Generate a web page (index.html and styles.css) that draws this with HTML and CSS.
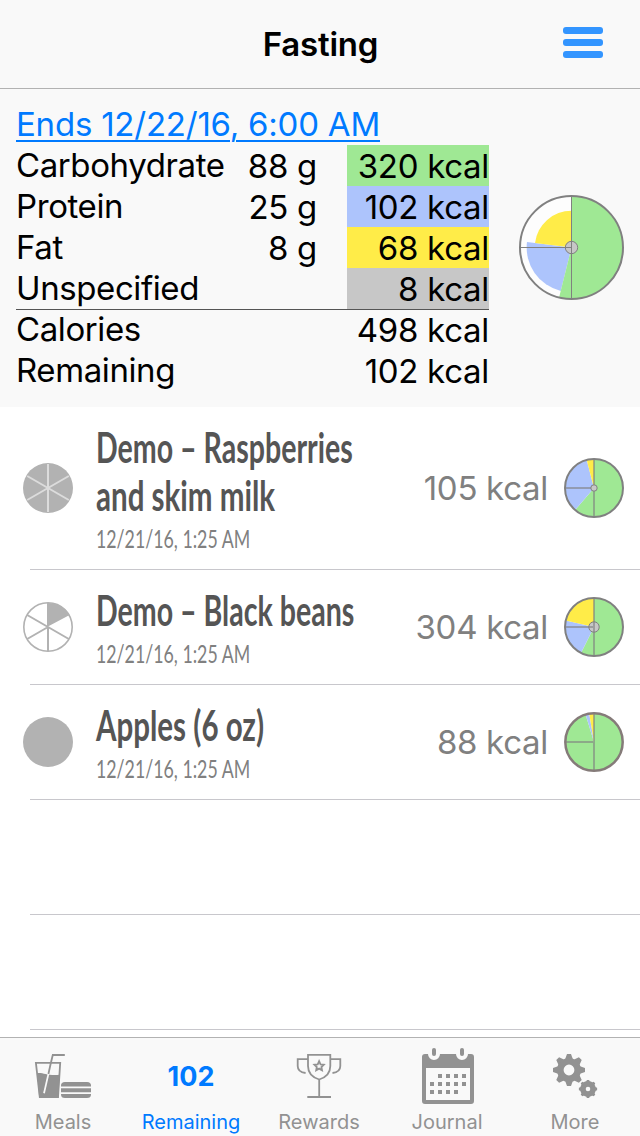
FILE: index.html
```html
<!DOCTYPE html>
<html lang="en">
<head>
  <meta charset="UTF-8" />
  <meta name="viewport" content="width=device-width, initial-scale=1.0" />
  <title>Fasting</title>
  <link rel="stylesheet" href="styles.css">
</head>
<body>
  <header class="navbar">
    <h1>Fasting</h1>
    <button class="menu" aria-label="Menu"><span></span><span></span><span></span></button>
  </header>

  <section class="summary">
    <div class="totals">
      <a class="ends" href="#">Ends 12/22/16, 6:00 AM</a>
      <div class="total"><span class="name">Carbohydrate</span><span class="grams">88 g</span><span class="kcal carb">320 kcal</span></div>
      <div class="total"><span class="name">Protein</span><span class="grams">25 g</span><span class="kcal protein">102 kcal</span></div>
      <div class="total"><span class="name">Fat</span><span class="grams">8 g</span><span class="kcal fat">68 kcal</span></div>
      <div class="total"><span class="name">Unspecified</span><span class="grams"></span><span class="kcal other">8 kcal</span></div>
      <div class="total sum"><span class="name">Calories</span><span class="grams"></span><span class="kcal">498 kcal</span></div>
      <div class="total"><span class="name">Remaining</span><span class="grams"></span><span class="kcal">102 kcal</span></div>
    </div>
    <svg class="pie-large" viewBox="-52.5 -52.5 105 105">
      <circle r="51.5" fill="#fdfdfd" />
      <path class="fill-protein" d="M0 0L-10.7 43.5A44.8 44.8 0 0 1 -44.5 -5.5Z" />
      <path class="fill-carb" d="M0 0V-51.5A51.5 51.5 0 1 1 -12.4 50Z" />
      <path class="fill-fat" d="M0 0L-36.5 -4.6A36.8 36.8 0 0 1 0 -36.8Z" />
      <circle class="hub" r="6.2" />
      <path class="axis" d="M0 -51V51M0 0H-51" />
      <circle class="ring" r="51.5" />
    </svg>
  </section>

  <main class="meals">
    <div class="meal meal-tall">
      <svg class="portion" viewBox="-25 -25 50 50">
        <circle r="25" />
        <path class="cuts light" d="M0 -24V24M-20.8 -12L20.8 12M-20.8 12L20.8 -12" />
      </svg>
      <div class="info">
        <div class="title"><span>Demo – Raspberries</span><br><span class="wide">and skim milk</span></div>
        <div class="date"><span>12/21/16, 1:25 AM</span></div>
      </div>
      <div class="energy">105 kcal</div>
      <svg class="pie" viewBox="-30 -30 60 60">
        <path class="fill-carb" d="M0 0V-29A29 29 0 1 1 -18.9 22Z" />
        <path class="fill-protein" d="M0 0L-18.9 22A29 29 0 0 1 -7.3 -28Z" />
        <path class="fill-fat" d="M0 0L-7.3 -28A29 29 0 0 1 0 -29Z" />
        <path class="axis" d="M0 -29V29M0 0H-29" />
        <circle class="hub" r="3.2" />
        <circle class="ring" r="29" />
      </svg>
    </div>
    <div class="meal">
      <svg class="portion" viewBox="-25 -25 50 50">
        <circle class="outline" r="24.2" />
        <path d="M-1 0V-24H0A24 24 0 0 1 21.6 -12Z" />
        <path class="cuts" d="M0 0V24M-20.8 -12L20.8 12M-20.8 12L0 0" />
      </svg>
      <div class="info">
        <div class="title"><span>Demo – Black beans</span></div>
        <div class="date"><span>12/21/16, 1:25 AM</span></div>
      </div>
      <div class="energy">304 kcal</div>
      <svg class="pie" viewBox="-30 -30 60 60">
        <path class="fill-carb" d="M0 0V-29A29 29 0 1 1 -13 25.9Z" />
        <path class="fill-protein" d="M0 0L-13 25.9A29 29 0 0 1 -28.3 -6.4Z" />
        <path class="fill-fat" d="M0 0L-28.3 -6.4A29 29 0 0 1 0 -29Z" />
        <circle class="hub" r="5.2" />
        <path class="axis" d="M0 -29V29M0 0H-29" />
        <circle class="ring" r="29" />
      </svg>
    </div>
    <div class="meal">
      <svg class="portion" viewBox="-25 -25 50 50">
        <circle r="25" />
      </svg>
      <div class="info">
        <div class="title"><span class="wide">Apples (6 oz)</span></div>
        <div class="date"><span>12/21/16, 1:25 AM</span></div>
      </div>
      <div class="energy">88 kcal</div>
      <svg class="pie" viewBox="-30 -30 60 60">
        <path class="fill-carb" d="M0 0V-29A29 29 0 1 1 -8.5 -27.7Z" />
        <path class="fill-protein" d="M0 0L-8.5 -27.7A29 29 0 0 1 -4.8 -28.6Z" />
        <path class="fill-fat" d="M0 0L-4.8 -28.6A29 29 0 0 1 0 -29Z" />
        <path class="axis" d="M0 -29V29M0 0H-29" />
        <circle class="ring thick" r="28.7" />
      </svg>
    </div>
    <div class="meal"></div>
    <div class="meal"></div>
  </main>

  <nav class="tabbar">
    <div class="tab">
      <svg class="icon" viewBox="33 17 60 64">
        <path class="line" d="M35.9 37.8H60.2L58 72.2H39.8Z" />
        <path d="M37.3 48.2C42 46.8 47 51 59.7 49.7L58.5 73H39.2Z" />
        <path class="line" d="M64.8 30H52.8L50.6 39L48.4 49" />
        <path class="straw" d="M48.4 49L44 68.3" />
        <path d="M61 61.4V60.5Q61 57 65 57H87Q91 57 91 60.5V61.4ZM61 63.2H91V67.2H61ZM61 69H91V69.5Q91 73 87 73H65Q61 73 61 69.5Z" />
      </svg>
      <span>Meals</span>
    </div>
    <div class="tab active">
      <b class="count">102</b>
      <span>Remaining</span>
    </div>
    <div class="tab">
      <svg class="icon" viewBox="39 17 60 64">
        <path class="line" d="M58 29.8H80.3V41C80.3 48.5 75.5 52.5 69.2 54.5C62.9 52.5 58 48.5 58 41ZM69.2 54V72M57.3 72H81M58 34.2H47.7V41C47.7 45 51 47.5 55.6 48M80.4 34.2H90.3V41C90.3 45 87 47.5 82.5 48" />
        <path class="line" d="M69.1 36.2L70.5 39.3L73.8 39.7L71.4 42L72 45.2L69.1 43.6L66.2 45.2L66.8 42L64.4 39.7L67.7 39.3Z" />
      </svg>
      <span>Rewards</span>
    </div>
    <div class="tab">
      <svg class="icon" viewBox="167 17 60 64">
        <path fill-rule="evenodd" d="M175 29H178A6 6 0 0 0 190 29H206A6 6 0 0 0 218 29H221Q224 29 224 32V76Q224 79 221 79H175Q172 79 172 76V32Q172 29 175 29ZM176 43V75H220V43Z" />
        <rect x="182" y="23" width="4" height="8" rx="2" />
        <rect x="210" y="23" width="4" height="8" rx="2" />
        <path class="days" d="M188 51H216M180 59H216M180 67H208" />
      </svg>
      <span>Journal</span>
    </div>
    <div class="tab">
      <svg class="icon" viewBox="45 17 60 64">
        <g transform="translate(69 45)">
          <circle class="gear" r="8.7" />
          <path id="teeth" d="M-3.8 -11L-2 -16H2L3.8 -11ZM-3.8 11L-2 16H2L3.8 11ZM-11 -3.8L-16 -2V2L-11 3.8ZM11 -3.8L16 -2V2L11 3.8Z" />
          <use href="#teeth" transform="rotate(45)" />
        </g>
        <g transform="translate(88 64)">
          <circle class="gear-small" r="5.1" />
          <use href="#teeth" transform="scale(.57)" />
          <use href="#teeth" transform="rotate(45) scale(.57)" />
        </g>
      </svg>
      <span>More</span>
    </div>
  </nav>
</body>
</html>
```
FILE: styles.css
```css
* {
  box-sizing: border-box;
}
body {
  margin: 0;
  width: 640px;
  height: 1136px;
  display: flex;
  flex-direction: column;
  overflow: hidden;
  background: #fff;
  color: #000;
  font-family: Inter, "Liberation Sans", sans-serif;
}

/* Top bar */
.navbar {
  height: 89px;
  display: grid;
  grid-template-columns: 1fr auto 1fr;
  align-items: center;
  padding: 0 37px;
  background: #f9f9f9;
  border-bottom: 1px solid #b2b2b2;
}
h1 {
  grid-column: 2;
  margin: 0;
  padding-left: 1px;
  font-size: 33px;
  line-height: 40px;
  font-weight: 600;
  letter-spacing: -.2px;
}
.menu {
  justify-self: end;
  display: flex;
  flex-direction: column;
  gap: 5px;
  width: 40px;
  margin-top: -3px;
  padding: 0;
  border: 0;
  background: none;
}
.menu span {
  height: 7px;
  border-radius: 3px;
  background: #3395ff;
}

/* Nutrient totals */
.summary {
  height: 318px;
  display: flex;
  justify-content: space-between;
  padding: 15px 16px 0;
  background: #f9f9f9;
  font-size: 33px;
  line-height: 41px;
}
.totals {
  width: 473px;
}
.ends {
  display: block;
  width: max-content;
  color: #007aff;
  letter-spacing: -.22px;
  text-decoration-thickness: 2px;
  text-underline-offset: 4px;
}
.total {
  height: 41px;
  display: grid;
  grid-template-columns: 210px 91px 142px;
  column-gap: 0;
}
.total .kcal {
  margin-left: 30px;
  width: 142px;
}
.name {
  letter-spacing: -.4px;
}
.grams, .kcal {
  text-align: right;
  padding-top: 1px;
  letter-spacing: -.3px;
}
.kcal {
  height: 41px;
}
.sum {
  border-top: 1px solid #555;
  line-height: 39px;
}
.sum .kcal {
  height: 40px;
}
.carb { background: #9fe894; }
.protein { background: #adc4fc; }
.fat { background: #ffec48; }
.other { background: #c7c7c7; }

/* Charts */
.pie-large {
  width: 105px;
  height: 105px;
  margin-top: 91px;
}
.pie {
  width: 60px;
  height: 60px;
}
.fill-carb { fill: #9fe894; }
.fill-protein { fill: #adc4fc; }
.fill-fat { fill: #ffec48; }
.axis {
  fill: none;
  stroke: #808080;
  stroke-width: 1;
}
.ring {
  fill: none;
  stroke: #808080;
  stroke-width: 2;
}
.hub {
  fill: #c7c7c7;
  stroke: #808080;
  stroke-width: 1;
}
.pie .axis {
  stroke-width: 2;
  opacity: .6;
}
.pie .thick {
  stroke: #857b79;
  stroke-width: 2.5;
}

/* Meal list */
.meals {
  flex: 1;
  overflow: hidden;
}
.meal {
  height: 115px;
  display: flex;
  align-items: center;
  margin-left: 30px;
  padding-right: 16px;
  border-bottom: 1px solid #c8c7cc;
}
.meal-tall {
  height: 163px;
}
.portion {
  width: 50px;
  height: 50px;
  margin: 0 23px 0 -7px;
  fill: #b2b2b2;
}
.cuts {
  fill: none;
  stroke: #b2b2b2;
  stroke-width: 2;
}
.light {
  stroke: #dcdcdc;
}
.outline {
  fill: none;
  stroke: #b2b2b2;
  stroke-width: 1.6;
}
.info {
  width: 300px;
  align-self: flex-start;
  padding-top: 16px;
  font-family: Lato, "Open Sans", sans-serif;
  white-space: nowrap;
}
.title {
  font-size: 42px;
  line-height: 48px;
  font-weight: 700;
  color: #555;
}
/* condensed look for meal names and dates */
.title span, .date span {
  display: inline-block;
  transform: scaleX(.68);
  transform-origin: left;
}
.title .wide {
  transform: scaleX(.703);
}
.date {
  font-size: 25px;
  line-height: 38px;
  color: #808080;
}
.date span {
  transform: scaleX(.71);
}
.energy {
  flex: 1;
  margin-right: 16px;
  text-align: right;
  font-size: 33px;
  letter-spacing: -.3px;
  color: #808080;
}

/* Bottom tabs */
.tabbar {
  height: 99px;
  display: grid;
  grid-template-columns: repeat(5, 128px);
  border-top: 1px solid #b2b2b2;
  background: #f9f9f9;
  color: #929292;
}
.tab {
  display: flex;
  flex-direction: column;
  align-items: center;
  margin-left: -2px;
  padding-top: 4px;
  font-size: 20px;
  line-height: 24px;
}
.active {
  color: #007aff;
}
.icon {
  width: 60px;
  height: 64px;
  margin-bottom: 4px;
  fill: #929292;
}
.count {
  height: 68px;
  font-size: 27px;
  line-height: 69px;
}
.line {
  fill: none;
  stroke: #929292;
  stroke-width: 1.8;
}
.straw {
  fill: none;
  stroke: #f9f9f9;
  stroke-width: 1.7;
}
.days {
  fill: none;
  stroke: #929292;
  stroke-width: 4;
  stroke-dasharray: 4;
}
.gear {
  fill: none;
  stroke: #929292;
  stroke-width: 6.6;
}
.gear-small {
  fill: none;
  stroke: #929292;
  stroke-width: 5.6;
}
```
